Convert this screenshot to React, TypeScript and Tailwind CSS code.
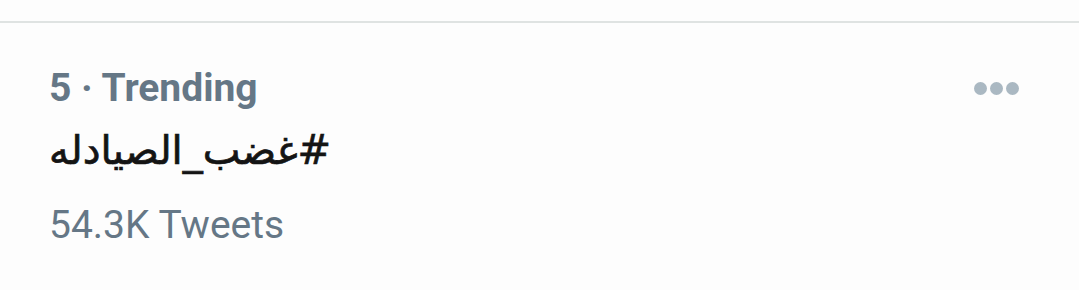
import React from "react";

export default function App() {
  return (
    <div className="w-[1079px] h-[290px] bg-[#fdfdfd] overflow-hidden" style={{ fontFamily: '"Roboto", "DejaVu Sans", sans-serif' }}>
      <div className="h-[21px]" />
      <div className="h-[2px] bg-[#dfe3e2]" />
      <div className="flex justify-between pl-[49px] pr-[60px] pt-[42px]">
        <div className="flex flex-col">
          <div className="text-[39px] leading-[46px] font-bold text-[#657786]">5 · Trending</div>
          <div dir="rtl" className="w-fit mt-[8px] text-[40px] leading-[62px] text-[#141414] [-webkit-text-stroke:0.7px_#141414]" style={{ fontFamily: '"DejaVu Sans", sans-serif' }}>#غضب_الصيادله</div>
          <div className="mt-[14px] text-[39px] leading-[60px] text-[#657786]">54.3K Tweets</div>
        </div>
        <div className="flex gap-[3px] pt-[17px]">
          <span className="w-[13px] h-[13px] rounded-full bg-[#aab8c2]" />
          <span className="w-[13px] h-[13px] rounded-full bg-[#aab8c2]" />
          <span className="w-[13px] h-[13px] rounded-full bg-[#aab8c2]" />
        </div>
      </div>
    </div>
  );
}
